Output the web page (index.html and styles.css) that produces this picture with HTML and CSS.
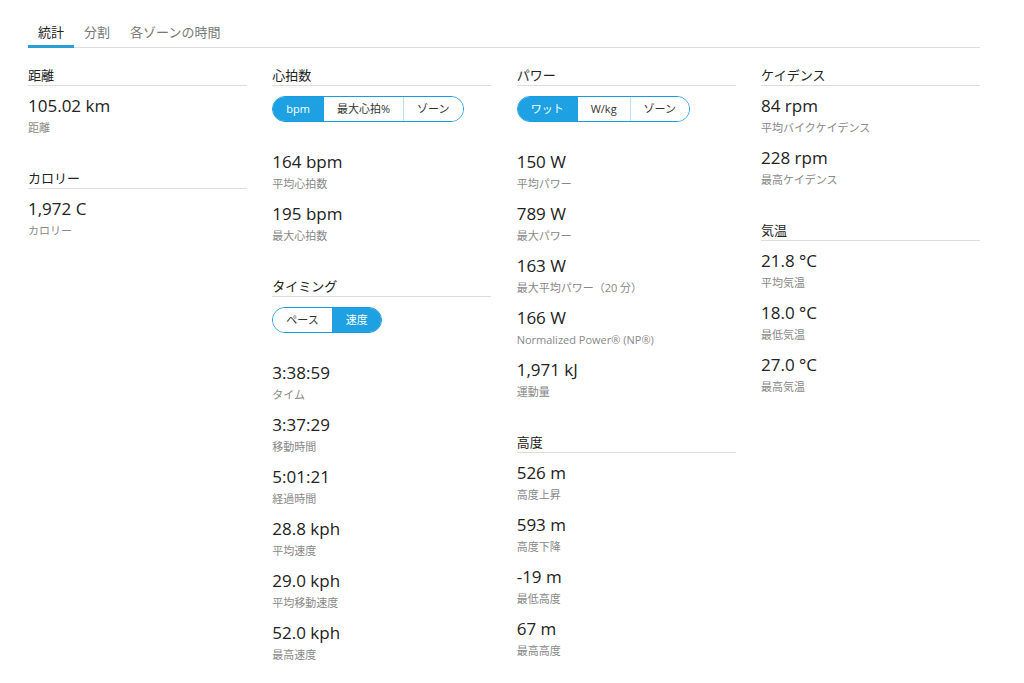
FILE: index.html
```html
<!DOCTYPE html>
<html lang="ja">
<head>
<meta charset="utf-8">
<link rel="stylesheet" href="styles.css">
</head>
<body>
<div class="page">
  <nav class="tabs">
    <span class="tab active">統計</span>
    <span class="tab">分割</span>
    <span class="tab">各ゾーンの時間</span>
  </nav>
  <div class="grid">
    <div class="col">
      <section class="sec">
        <h3 class="hd">距離</h3>
        <div class="stat"><div class="val">105.02 km</div><div class="lbl">距離</div></div>
      </section>
      <section class="sec">
        <h3 class="hd">カロリー</h3>
        <div class="stat"><div class="val">1,972 C</div><div class="lbl">カロリー</div></div>
      </section>
    </div>
    <div class="col">
      <section class="sec">
        <h3 class="hd">心拍数</h3>
        <div class="seg"><span class="opt on">bpm</span><span class="opt">最大心拍%</span><span class="opt">ゾーン</span></div>
        <div class="stat"><div class="val">164 bpm</div><div class="lbl">平均心拍数</div></div>
        <div class="stat"><div class="val">195 bpm</div><div class="lbl">最大心拍数</div></div>
      </section>
      <section class="sec">
        <h3 class="hd">タイミング</h3>
        <div class="seg"><span class="opt">ペース</span><span class="opt on">速度</span></div>
        <div class="stat"><div class="val">3:38:59</div><div class="lbl">タイム</div></div>
        <div class="stat"><div class="val">3:37:29</div><div class="lbl">移動時間</div></div>
        <div class="stat"><div class="val">5:01:21</div><div class="lbl">経過時間</div></div>
        <div class="stat"><div class="val">28.8 kph</div><div class="lbl">平均速度</div></div>
        <div class="stat"><div class="val">29.0 kph</div><div class="lbl">平均移動速度</div></div>
        <div class="stat"><div class="val">52.0 kph</div><div class="lbl">最高速度</div></div>
      </section>
    </div>
    <div class="col">
      <section class="sec">
        <h3 class="hd">パワー</h3>
        <div class="seg"><span class="opt on">ワット</span><span class="opt">W/kg</span><span class="opt">ゾーン</span></div>
        <div class="stat"><div class="val">150 W</div><div class="lbl">平均パワー</div></div>
        <div class="stat"><div class="val">789 W</div><div class="lbl">最大パワー</div></div>
        <div class="stat"><div class="val">163 W</div><div class="lbl">最大平均パワー（20 分）</div></div>
        <div class="stat"><div class="val">166 W</div><div class="lbl">Normalized Power® (NP®)</div></div>
        <div class="stat"><div class="val">1,971 kJ</div><div class="lbl">運動量</div></div>
      </section>
      <section class="sec">
        <h3 class="hd">高度</h3>
        <div class="stat"><div class="val">526 m</div><div class="lbl">高度上昇</div></div>
        <div class="stat"><div class="val">593 m</div><div class="lbl">高度下降</div></div>
        <div class="stat"><div class="val">-19 m</div><div class="lbl">最低高度</div></div>
        <div class="stat"><div class="val">67 m</div><div class="lbl">最高高度</div></div>
      </section>
    </div>
    <div class="col">
      <section class="sec">
        <h3 class="hd">ケイデンス</h3>
        <div class="stat"><div class="val">84 rpm</div><div class="lbl">平均バイクケイデンス</div></div>
        <div class="stat"><div class="val">228 rpm</div><div class="lbl">最高ケイデンス</div></div>
      </section>
      <section class="sec">
        <h3 class="hd">気温</h3>
        <div class="stat"><div class="val">21.8 °C</div><div class="lbl">平均気温</div></div>
        <div class="stat"><div class="val">18.0 °C</div><div class="lbl">最低気温</div></div>
        <div class="stat"><div class="val">27.0 °C</div><div class="lbl">最高気温</div></div>
      </section>
    </div>
  </div>
</div>
</body>
</html>
```
FILE: styles.css
```css
* { box-sizing: border-box; }
html, body { margin: 0; padding: 0; background: #fff; }
body {
  font-family: "Open Sans", "Noto Sans CJK JP", sans-serif;
  color: #222;
}
.page {
  width: 952px;
  margin-left: 28px;
}
.tabs {
  display: flex;
  border-bottom: 1px solid #ddd;
  height: 48px;
}
.tab {
  padding: 23px 10px 0;
  font-size: 13px;
  line-height: 18px;
  color: #777;
  height: 48px;
  border-bottom: 3px solid transparent;
  margin-bottom: -1px;
}
.tab.active {
  color: #222;
  border-bottom-color: #2a9fd6;
}
.grid {
  display: grid;
  grid-template-columns: repeat(4, 219px);
  column-gap: 25.33px;
  margin-top: 18px;
}
.sec { margin-bottom: 33px; }
.hd {
  margin: 0;
  font-size: 13px;
  font-weight: normal;
  line-height: 19px;
  border-bottom: 1px solid #ddd;
  color: #222;
}
.stat { margin-top: 9px; }
.stat + .stat { margin-top: 11px; }
.val {
  font-size: 17px;
  line-height: 22px;
  color: #222;
}
.lbl {
  font-size: 11px;
  line-height: 17px;
  color: #888;
  margin-top: 2px;
}
.seg {
  display: inline-flex;
  height: 26px;
  margin-top: 10px;
  margin-bottom: 20px;
  border: 1px solid #1a9bdc;
  border-radius: 13px;
  overflow: hidden;
}
.opt {
  padding: 0 13px;
  font-size: 11px;
  line-height: 24px;
  color: #333;
  background: #fff;
  border-left: 1px solid #bcdff0;
}
.opt:first-child { border-left: none; }
.opt.on {
  background: #1da1e2;
  color: #fff;
  border-left-color: #1da1e2;
}
.opt.on + .opt { border-left-color: #1da1e2; }
```
